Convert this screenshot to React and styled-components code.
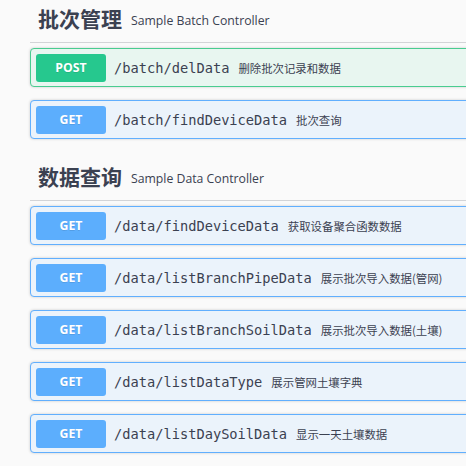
import React from "react";
import styled, { createGlobalStyle } from "styled-components";

const Global = createGlobalStyle`
  html, body { margin: 0; padding: 0; background: #fafafa; overflow: hidden; }
  body { width: 466px; height: 466px; }
`;

const Page = styled.div`
  width: 520px;
  padding: 0 0 0 30px;
  font-family: "Open Sans", "Noto Sans CJK SC", sans-serif;
  color: #3b4151;
`;

const Section = styled.section`
  display: flex;
  flex-direction: column;
  margin-bottom: 6px;
`;

const TagHeading = styled.h4`
  display: flex;
  align-items: center;
  margin: 0 0 5px;
  height: 42px;
  padding: 0 0 0 8px;
  border-bottom: 1px solid #d3d4d7;
  font-family: "Noto Sans CJK SC", sans-serif;
  font-size: 21px;
  font-weight: 700;
  color: #3b4151;
  box-sizing: content-box;
`;

const TagTitle = styled.span`
  line-height: 26px;
  position: relative;
  top: -3px;
`;

const TagSub = styled.small`
  padding: 0 9px;
  font-family: "Open Sans", sans-serif;
  font-size: 12.25px;
  font-weight: 400;
  color: #3b4151;
  position: relative;
  top: -1px;
`;

const themes = {
  POST: { main: "#49cc90", badge: "#26c88e", bg: "#e8f6f0" },
  GET: { main: "#61affe", badge: "#5caefd", bg: "#ebf3fb" },
};

const Block = styled.div`
  display: flex;
  align-items: center;
  height: 39px;
  box-sizing: border-box;
  padding: 0 5px;
  margin-bottom: 13px;
  border: 1px solid ${(p) => themes[p.$method].main};
  background: ${(p) => themes[p.$method].bg};
  border-radius: 4px;
  box-shadow: 0 0 3px rgba(0, 0, 0, 0.19);
`;

const Method = styled.span`
  flex: none;
  width: 70px;
  height: 28px;
  display: flex;
  align-items: center;
  justify-content: center;
  border-radius: 3px;
  background: ${(p) => themes[p.$method].badge};
  color: #fff;
  font-family: "Open Sans", sans-serif;
  font-weight: 700;
  font-size: 12.25px;
  text-shadow: 0 1px 0 rgba(0, 0, 0, 0.1);
`;

const Path = styled.span`
  padding: 0 9px 0 8px;
  font-family: "DejaVu Sans Mono", monospace;
  font-size: 13.7px;
  font-weight: 400;
  color: #3b4151;
  white-space: nowrap;
`;

const Desc = styled.span`
  font-family: "Noto Sans CJK SC", sans-serif;
  font-size: 11.4px;
  color: #3b4151;
  white-space: nowrap;
`;

const sections = [
  {
    title: "批次管理",
    sub: "Sample Batch Controller",
    ops: [
      ["POST", "/batch/delData", "删除批次记录和数据"],
      ["GET", "/batch/findDeviceData", "批次查询"],
    ],
  },
  {
    title: "数据查询",
    sub: "Sample Data Controller",
    ops: [
      ["GET", "/data/findDeviceData", "获取设备聚合函数数据"],
      ["GET", "/data/listBranchPipeData", "展示批次导入数据(管网)"],
      ["GET", "/data/listBranchSoilData", "展示批次导入数据(土壤)"],
      ["GET", "/data/listDataType", "展示管网土壤字典"],
      ["GET", "/data/listDaySoilData", "显示一天土壤数据"],
    ],
  },
];

export default function App() {
  return (
    <>
      <Global />
      <Page>
        {sections.map((s) => (
          <Section key={s.title}>
            <TagHeading>
              <TagTitle>{s.title}</TagTitle>
              <TagSub>{s.sub}</TagSub>
            </TagHeading>
            {s.ops.map(([m, p, d]) => (
              <Block key={p} $method={m}>
                <Method $method={m}>{m}</Method>
                <Path>{p}</Path>
                <Desc>{d}</Desc>
              </Block>
            ))}
          </Section>
        ))}
      </Page>
    </>
  );
}
